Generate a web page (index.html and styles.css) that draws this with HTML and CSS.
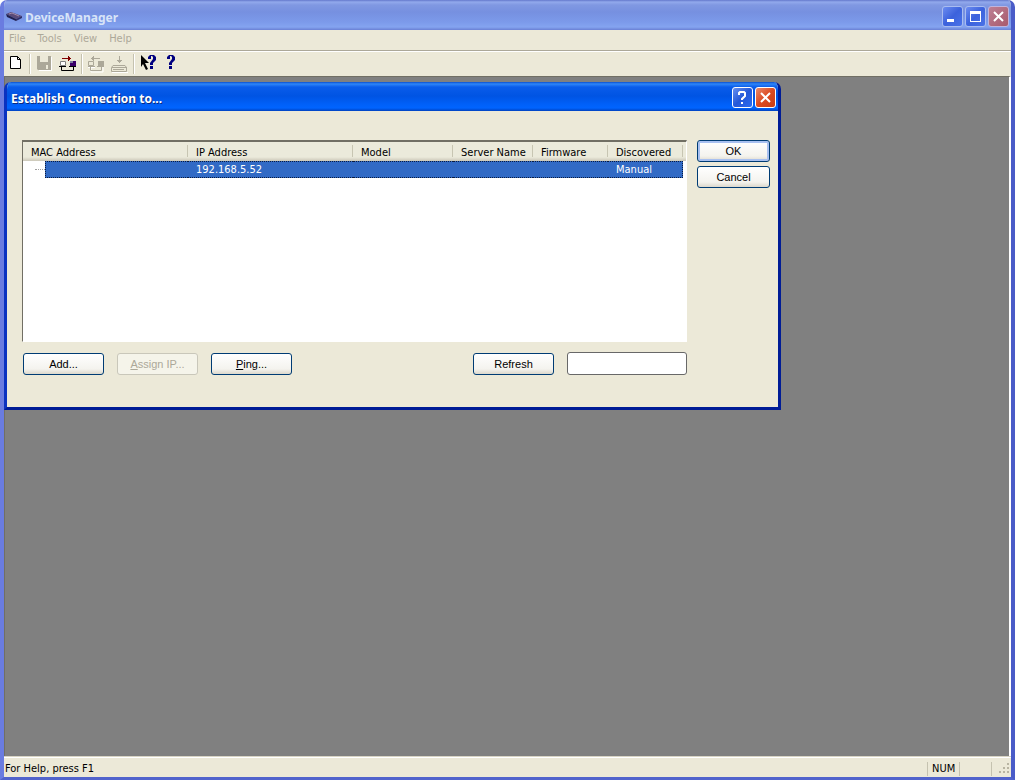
FILE: index.html
```
<!DOCTYPE html>
<html lang="en">
<head>
<meta charset="utf-8">
<title>DeviceManager</title>
<link rel="stylesheet" href="styles.css">
</head>
<body>
<div class="window">
  <header class="titlebar">
    <svg class="app-icon" width="16" height="12" viewBox="0 0 16 12"><path d="M0 3l5-2 11 4-6 3z" fill="#5a4a78"/><path d="M0 3l10 5v2L1 6z" fill="#20204e"/><path d="M10 8l6-3v2l-6 3z" fill="#302f68"/><path d="M3 3l3-1 7 3" stroke="#a08aa8" fill="none"/></svg>
    <h1 class="title">DeviceManager</h1>
    <button class="cap blue" aria-label="Minimize"><svg width="19" height="19" viewBox="0 0 19 19"><path d="M4 12h7v3H4z" fill="#fff"/></svg></button>
    <button class="cap blue" aria-label="Maximize"><svg width="19" height="19" viewBox="0 0 19 19"><path d="M4 4h11v11H4zM5 7v7h9V7z" fill="#fff" fill-rule="evenodd"/></svg></button>
    <button class="cap faded" aria-label="Close"><svg width="19" height="19" viewBox="0 0 19 19"><path d="M5 5l9 9M14 5l-9 9" stroke="#fff" stroke-width="2"/></svg></button>
  </header>
  <nav class="menu">
    <button disabled>File</button><button disabled>Tools</button><button disabled>View</button><button disabled>Help</button>
  </nav>
  <div class="toolbar">
    <button aria-label="New"><svg width="24" height="22" viewBox="0 0 24 22"><path d="M6.500 3.500h7l3 3v9h-10z" fill="#fff" stroke="#000"/><path d="M13.500 3.500v3h3" fill="none" stroke="#000"/></svg></button>
    <span class="sep"></span>
    <button disabled aria-label="Save"><svg width="24" height="22" viewBox="0 0 24 22"><path d="M6 4h14v14H7z" fill="#fff"/><path d="M5 3h14v14H6l-1-1z" fill="#aca899"/><path d="M8 3h8v6H8zM14 12h2v4h-2z" fill="#ece9d8"/></svg></button>
    <button aria-label="Connect"><svg width="24" height="22" viewBox="0 0 24 22"><path d="M6 5h6v1H6zM12 3h1v1h1v1h1v1h-1v1h-1v1h-1z" fill="#800000"/><path d="M4.500 8.500h5v4h-5z" fill="#fff" stroke="#808080"/><path d="M14 8h6v5h-6z" fill="#3b0068"/><path d="M14 8h3v2h-3z" fill="#8080a0"/><path d="M5.500 14v3.500h12V14M3 13.500h7M13 13.500h7" stroke="#000" fill="none"/></svg></button>
    <span class="sep"></span>
    <button disabled aria-label="Disconnect"><svg width="24" height="22" viewBox="0 0 24 22"><path d="M7 15v4h12v-5M4 14.500h7" stroke="#fff" fill="none"/><path d="M10 5h6v1h-6zM10 3H9v1H8v1H7v1h1v1h1v1h1z" fill="#aca899"/><path d="M4.500 8.500h5v4h-5z" fill="#ece9d8" stroke="#aca899"/><path d="M14 8h6v5h-6z" fill="#aca899"/><path d="M6.500 14v3.500h11V14M4 13.500h7M13 13.500h7" stroke="#aca899" fill="none"/></svg></button>
    <button disabled aria-label="Download"><svg width="24" height="22" viewBox="0 0 24 22"><path d="M11 3h1v4h2v1h-1v1h-1v1h-1V9h-1V8H9V7h2z" fill="#aca899"/><path d="M5 12.500l-1.500 2v4h15v-4l-1.500-2zM4 14.500h15M5 16.500h11" stroke="#aca899" fill="none"/><path d="M4 19.500h16" stroke="#fff"/></svg></button>
    <span class="sep"></span>
    <button aria-label="Context help"><svg width="24" height="22" viewBox="0 0 24 22"><path d="M5 2l8 8h-4l3 6-2 1-3-6-2 3z" fill="#000"/><path d="M12 6V4l2-2h4l2 2v3l-3 3v2h-3v-2l3-4V4l-1-1h-1v3zM14 13h3v3h-3z" fill="#000080"/></svg></button>
    <button aria-label="Help"><svg width="24" height="22" viewBox="0 0 24 22"><path d="M7 6V4l2-2h4l2 2v3l-3 3v2H9v-2l3-4V4l-1-1h-1v3zM9 13h3v3H9z" fill="#000080"/></svg></button>
  </div>
  <main class="workspace"></main>
  <footer class="status"><span class="hint">For Help, press F1</span><span class="pane">NUM</span><span class="pane"></span><span class="pane grip"><svg width="12" height="12" viewBox="0 0 12 12"><path d="M9 1h2v2H9zM5 5h2v2H5zM9 5h2v2H9zM1 9h2v2H1zM5 9h2v2H5zM9 9h2v2H9z" fill="#b8b4a2"/></svg></span></footer>

  <section class="dialog" role="dialog" aria-labelledby="dlg-title">
    <header class="dialog-title">
      <h2 class="title" id="dlg-title">Establish Connection to...</h2>
      <button class="cap bright" aria-label="Help"><svg width="19" height="19" viewBox="0 0 19 19"><path d="M6 7V5l1-1h4l1 1v3l-3 3v1M8 15h2" stroke="#fff" stroke-width="2" fill="none"/></svg></button>
      <button class="cap red" aria-label="Close"><svg width="19" height="19" viewBox="0 0 19 19"><path d="M5 5l9 9M14 5l-9 9" stroke="#fff" stroke-width="2"/></svg></button>
    </header>
    <div class="dialog-body">
      <div class="left">
        <div class="list">
          <table>
            <colgroup><col class="c-mac"><col class="c-ip"><col class="c-model"><col class="c-server"><col class="c-firm"><col class="c-disc"><col></colgroup>
            <thead><tr><th>MAC Address</th><th>IP Address</th><th>Model</th><th>Server Name</th><th>Firmware</th><th>Discovered</th><th class="rest"></th></tr></thead>
            <tbody><tr><td class="tree"><span class="branch"></span><span class="bar"></span></td><td>192.168.5.52</td><td></td><td></td><td></td><td>Manual</td><td class="rest"></td></tr></tbody>
          </table>
        </div>
        <div class="actions">
          <button class="btn">Add...</button>
          <button class="btn" disabled><u>A</u>ssign IP...</button>
          <button class="btn"><u>P</u>ing...</button>
          <button class="btn refresh">Refresh</button>
          <input class="field" type="text" aria-label="Refresh progress" readonly>
        </div>
      </div>
      <div class="right">
        <button class="btn default">OK</button>
        <button class="btn">Cancel</button>
      </div>
    </div>
  </section>
</div>
</body>
</html>
```
FILE: styles.css
```
* { box-sizing: border-box; }
body { margin: 0; background: #fff; font: 11px/14px "DejaVu Sans Condensed", "Noto Sans", sans-serif; color: #000; }
button { font: inherit; padding: 0; border: 0; background: none; }
svg { display: block; }
.window {
  position: relative; min-height: 100vh; display: flex; flex-direction: column;
  background: #ece9d8; border: solid #6a7ce0; border-width: 0 4px 3px;
  border-right-color: #4a5cc8; border-bottom-color: #5163cc; border-radius: 7px 7px 0 0; overflow: hidden;
}
.titlebar {
  display: flex; align-items: center; gap: 2px; height: 30px; margin: 0 -4px; padding: 3px 6px 0;
  background: linear-gradient(#6478cc 0, #92a9ec 2px, #8098e2 5px, #7690e0 12px, #7c9aea 22px, #84a4f0 27px, #6a80d4 30px);
}
.title { flex: 1; margin: 0; padding-top: 2px; font: bold 12px/18px "Noto Sans", "Open Sans", sans-serif; }
.titlebar .title { color: #d8e4f8; padding-left: 1px; }
.cap { width: 21px; height: 21px; border: 1px solid #fff; border-radius: 3px; }
.blue { border-color: #a9bcf0; background: linear-gradient(135deg, #6c8cf0, #3c62dc 50%, #4a72e8); }
.faded { border-color: #c0b4dc; background: linear-gradient(135deg, #bd7f94, #a85a6c); }
.bright { background: linear-gradient(135deg, #6790f0, #2458d8 50%, #2a6af0); }
.red { background: linear-gradient(135deg, #e88a6c, #dc4a20 50%, #c83c14); }
.menu { display: flex; align-items: flex-start; gap: 12px; height: 21px; padding: 2px 5px 0; border-bottom: 1px solid #aca899; }
.menu button { color: #aca899; }
.toolbar { display: flex; align-items: center; height: 25px; border-top: 1px solid #fff; }
.sep { width: 2px; height: 20px; margin: 0 1px; border-left: 1px solid #c5c2b0; border-right: 1px solid #fff; }
.workspace { flex: 1; background: #808080; border: solid #716f64; border-width: 1px 1px 0; border-right: 2px solid #fff; }
.status { display: flex; align-items: center; height: 20px; padding-top: 2px; border-top: 1px solid #fff; box-shadow: 0 -1px #d8d4c4; }
.hint { flex: 1; padding-left: 1px; }
.pane { width: 32px; height: 14px; padding-left: 4px; border-left: 1px solid #c5c2b0; }
.grip { width: 20px; padding-left: 6px; }
.dialog {
  position: absolute; left: 0; top: 82px; width: 777px; background: #ece9d8;
  border: solid #0a32c0; border-width: 0 3px 3px; border-right-color: #001c96; border-bottom-color: #001c96; border-radius: 7px 7px 0 0; overflow: hidden;
}
.dialog-title {
  display: flex; align-items: center; gap: 2px; height: 29px; margin: 0 -3px; padding: 2px 5px 0 7px;
  background: linear-gradient(#0a50d0 0, #2f86f8 2px, #0a5cea 5px, #0054e3 14px, #0060f8 22px, #0064ff 26px, #0042c0 29px);
}
.dialog-title .title { color: #fff; text-shadow: 1px 1px #0a2a80; }
.dialog-body { display: flex; gap: 10px; padding: 29px 8px 32px 15px; }
.left { flex: 1; }
.list { height: 202px; background: #fff; border: 1px solid #fff; border-top: 2px solid #716f64; border-left-color: #716f64; }
table { width: 100%; border-spacing: 0; table-layout: fixed; }
th { height: 19px; padding: 2px 0 0 8px; text-align: left; font-weight: normal; line-height: 14px; white-space: nowrap;
  background: linear-gradient(90deg, #c7c5b2, #c7c5b2) right 3px / 1px 12px no-repeat, linear-gradient(#ebeadb 15px, #cbc7b8); }
th.rest { padding: 0; background: linear-gradient(#ebeadb 15px, #cbc7b8); }
td { height: 17px; padding: 1px 0 0 8px; color: #fff; background: #316ac5; border: dotted #0a1c40; border-width: 1px 0; line-height: 14px; }
td:nth-child(6) { border-right-width: 1px; }
.tree { padding: 0; border: 0; background: #fff; }
.tree span { display: inline-block; vertical-align: middle; }
.branch { width: 10px; margin-left: 12px; border-top: 1px dotted #a0a0a0; }
.bar { width: calc(100% - 22px); height: 17px; background: #316ac5; border: dotted #0a1c40; border-width: 1px 0 1px 1px; }
.tree { display: flex; align-items: center; }
td.rest { padding: 0; border: 0; background: #fff; }
.c-mac, .c-ip { width: 165px; } .c-model { width: 100px; } .c-server { width: 80px; } .c-firm { width: 75px; } .c-disc { width: 75px; }
.actions { display: flex; align-items: center; gap: 13px; margin-top: 10px; padding-left: 1px; }
.btn { width: 81px; height: 22px; border: 1px solid #003c74; border-radius: 3px; background: linear-gradient(#fff, #f4f3ee 75%, #dcd8cc);
  font: 11px/14px "Liberation Sans", Arial, sans-serif; }
.btn:disabled { color: #aca899; border-color: #c9c7ba; background: #f5f4ea; }
.refresh { margin-left: auto; }
.field { width: 120px; height: 23px; border: 1px solid #686868; border-radius: 3px; background: #fff; }
.right { width: 73px; display: flex; flex-direction: column; gap: 4px; }
.right .btn { width: 73px; }
.default { box-shadow: inset 0 0 0 2px #a8c0f0; }
```
